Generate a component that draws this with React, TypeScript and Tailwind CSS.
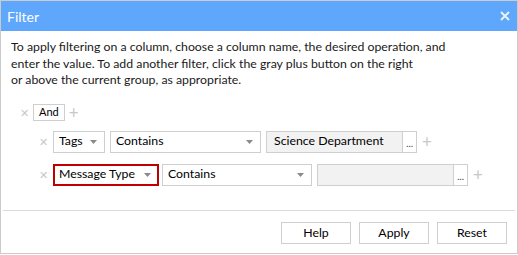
import React from "react";

const font = { fontFamily: '"Segoe UI", Lato, "Noto Sans", sans-serif' };

function Caret() {
  return (
    <svg width="7" height="4" viewBox="0 0 7 4" className="shrink-0">
      <path d="M0 0h7L3.5 4z" fill="#8a8a8a" />
    </svg>
  );
}

function Remove() {
  return <span className="w-[10px] shrink-0 text-center text-[11px] leading-none text-[#c8c8c8]">✕</span>;
}

function Plus() {
  return <span className="text-[17px] leading-none text-[#c8c8c8]">+</span>;
}

function Select({ label, width, danger }: { label: string; width: string; danger?: boolean }) {
  return (
    <div
      className={`flex h-[22px] shrink-0 items-center justify-between whitespace-nowrap bg-white text-[12.3px] text-black ${width} ${
        danger ? "border-2 border-[#c00000] pl-[4px] pr-[6px]" : "border border-[#cfcfcf] pl-[5px] pr-[7px]"
      }`}
    >
      <span>{label}</span>
      <Caret />
    </div>
  );
}

function Value({ text }: { text: string }) {
  return (
    <div className="flex h-[22px] shrink-0">
      <div className="flex w-[137px] items-center whitespace-nowrap border border-[#cfcfcf] bg-[#f2f2f2] px-[7px] text-[12.3px] text-black">
        {text}
      </div>
      <div className="flex w-[14px] items-end justify-center border border-l-0 border-[#cfcfcf] bg-white pb-[4px] text-[9px] leading-none text-[#333]">
        …
      </div>
    </div>
  );
}

export default function App() {
  return (
    <div className="flex h-[254px] w-[518px] flex-col border border-[#cbcbcb] bg-white" style={font}>
      <div className="flex h-[30px] shrink-0 items-center justify-between bg-[#5fa6fd] pl-[6px] pr-[7px]">
        <span className="text-[14px] text-white">Filter</span>
        <svg width="10" height="10" viewBox="0 0 10 10">
          <path d="M1 1l8 8M9 1l-8 8" stroke="#e8f2ff" strokeWidth="2" />
        </svg>
      </div>

      <p className="px-[10px] pt-[8px] text-[12.3px] leading-[16.5px] text-[#1a1a1a]">
        To apply filtering on a column, choose a column name, the desired operation, and
        <br />
        enter the value. To add another filter, click the gray plus button on the right
        <br />
        or above the current group, as appropriate.
      </p>

      <div className="flex flex-col gap-[9px] pl-[18px] pt-[15px]">
        <div className="flex items-center gap-[4px]">
          <Remove />
          <div className="flex h-[17px] items-center border border-[#cfcfcf] px-[5px] text-[11px] text-black">And</div>
          <Plus />
        </div>

        <div className="flex items-center pl-[19px]">
          <Remove />
          <div className="ml-[5px]">
            <Select label="Tags" width="w-[52px]" />
          </div>
          <div className="ml-[5px]">
            <Select label="Contains" width="w-[151px]" />
          </div>
          <div className="ml-[5px]">
            <Value text="Science Department" />
          </div>
          <div className="ml-[5px]">
            <Plus />
          </div>
        </div>

        <div className="flex items-center pl-[19px]">
          <Remove />
          <div className="ml-[5px]">
            <Select label="Message Type" width="w-[106px]" danger />
          </div>
          <div className="ml-[3px]">
            <Select label="Contains" width="w-[150px]" />
          </div>
          <div className="ml-[5px]">
            <Value text="" />
          </div>
          <div className="ml-[5px]">
            <Plus />
          </div>
        </div>
      </div>

      <div className="mx-[2px] mt-auto border-t border-[#d9d9d9]">
        <div className="flex justify-end gap-[8px] pb-[9px] pr-[8px] pt-[11px]">
          {["Help", "Apply", "Reset"].map((b) => (
            <button
              key={b}
              className="h-[22px] w-[70px] border border-[#cfcfcf] bg-white text-[12.3px] text-black"
            >
              {b}
            </button>
          ))}
        </div>
      </div>
    </div>
  );
}
